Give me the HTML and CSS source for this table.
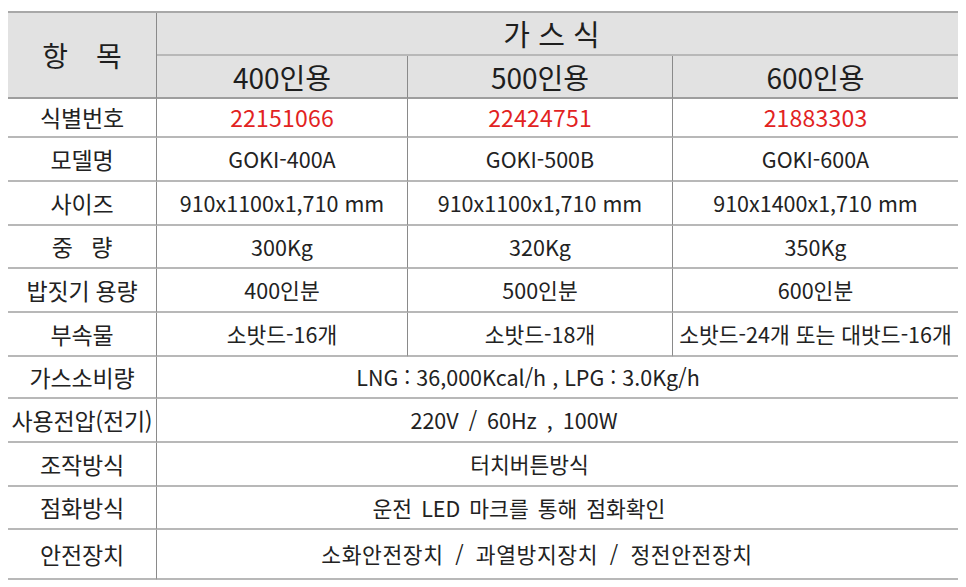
FILE: index.html
```html
<!DOCTYPE html>
<html lang="ko">
<head>
<meta charset="utf-8">
<title>가스식 사양</title>
<link rel="stylesheet" href="styles.css">
</head>
<body>
<div class="spec">
  <div class="cell head item"><span>항</span><span>목</span></div>
  <div class="cell head group span3">가&nbsp;스&nbsp;식</div>
  <div class="cell head sub vline">400인용</div>
  <div class="cell head sub vline">500인용</div>
  <div class="cell head sub">600인용</div>

  <div class="cell label">식별번호</div>
  <div class="cell red vline">22151066</div>
  <div class="cell red vline">22424751</div>
  <div class="cell red">21883303</div>

  <div class="cell label">모델명</div>
  <div class="cell vline">GOKI-400A</div>
  <div class="cell vline">GOKI-500B</div>
  <div class="cell">GOKI-600A</div>

  <div class="cell label">사이즈</div>
  <div class="cell vline">910x1100x1,710 mm</div>
  <div class="cell vline">910x1100x1,710 mm</div>
  <div class="cell">910x1400x1,710 mm</div>

  <div class="cell label">중&nbsp;&nbsp;&nbsp;량</div>
  <div class="cell vline">300Kg</div>
  <div class="cell vline">320Kg</div>
  <div class="cell">350Kg</div>

  <div class="cell label">밥짓기 용량</div>
  <div class="cell vline">400인분</div>
  <div class="cell vline">500인분</div>
  <div class="cell">600인분</div>

  <div class="cell label">부속물</div>
  <div class="cell vline">소밧드-16개</div>
  <div class="cell vline">소밧드-18개</div>
  <div class="cell">소밧드-24개 또는 대밧드-16개</div>

  <div class="cell label">가스소비량</div>
  <div class="cell span3 shift-gas">LNG : 36,000Kcal/h , LPG : 3.0Kg/h</div>

  <div class="cell label">사용전압(전기)</div>
  <div class="cell span3 shift-volt">220V / 60Hz , 100W</div>

  <div class="cell label">조작방식</div>
  <div class="cell span3 shift-ctrl">터치버튼방식</div>

  <div class="cell label">점화방식</div>
  <div class="cell span3 shift-fire">운전 LED 마크를 통해 점화확인</div>

  <div class="cell label">안전장치</div>
  <div class="cell span3 shift-safe">소화안전장치 / 과열방지장치 / 정전안전장치</div>
</div>
</body>
</html>
```
FILE: styles.css
```css
html, body {
  margin: 0;
  padding: 0;
  background: #ffffff;
}

body {
  font-family: "Noto Sans CJK KR", "Noto Sans", sans-serif;
  color: #222222;
}

.spec {
  margin: 11px 8px 0 8px;
  width: 950px;
  display: grid;
  grid-template-columns: 149px 251px 265px 285px;
  grid-template-rows: 43px 43px 39px 44px 44px 43px 44px 44px 42px 44px 44px 43px 50px;
  border-top: 2px solid #a8a8a8;
}

.cell {
  box-sizing: border-box;
  display: flex;
  align-items: center;
  justify-content: center;
  border-bottom: 2px solid #b8b8b8;
  font-size: 21.5px;
  line-height: 1;
  white-space: nowrap;
}

.head {
  background: #e2e2e2;
  font-size: 28px;
  color: #1e1e1e;
}

.item {
  grid-row: span 2;
  gap: 28px;
  border-right: 1px solid #8a8a8a;
  border-bottom: 2px solid #9e9e9e;
}

.group {
  font-size: 29px;
  padding-right: 12px;
}

.sub {
  border-bottom: 2px solid #9e9e9e;
}

.span3 {
  grid-column: span 3;
}

.label {
  font-size: 23px;
  letter-spacing: -0.2px;
  border-right: 1px solid #8a8a8a;
}

.vline {
  border-right: 1px solid #8a8a8a;
}

.red {
  color: #e2231f;
  font-size: 23px;
  letter-spacing: 0.2px;
}

.shift-gas {
  padding-right: 59px;
}

.shift-volt {
  padding-right: 87px;
  word-spacing: 4px;
}

.shift-ctrl {
  padding-right: 56px;
}

.shift-fire {
  padding-right: 77px;
  word-spacing: 3px;
}

.shift-safe {
  padding-right: 41px;
  letter-spacing: 0.6px;
  word-spacing: 5px;
}
```
